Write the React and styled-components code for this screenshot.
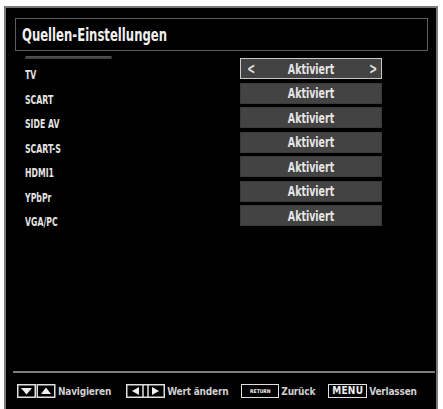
import React from 'react';
import styled, { createGlobalStyle } from 'styled-components';

const Global = createGlobalStyle`
  html, body {
    margin: 0;
    padding: 0;
    background: #fff;
    overflow: hidden;
  }
  body {
    font-family: "DejaVu Sans Condensed", "Liberation Sans Narrow", "DejaVu Sans", sans-serif;
    font-stretch: condensed;
  }
`;

const Frame = styled.div`
  box-sizing: border-box;
  margin: 6px 5px 0 4px;
  height: 405px;
  background: #000;
  border: 2px solid #7a7a7a;
  display: flex;
  flex-direction: column;
`;

const TitleBox = styled.div`
  box-sizing: border-box;
  margin: 10px 8px 0 9px;
  height: 33px;
  border: 1.5px solid #5e5e5e;
  display: flex;
  align-items: center;
  padding-left: 6px;
`;

const Title = styled.h1`
  margin: 0;
  font-size: 18px;
  font-weight: bold;
  color: #f0f0f0;
  transform: scaleX(0.72);
  transform-origin: left center;
  white-space: nowrap;
`;

const List = styled.div`
  margin-top: 7px;
  padding: 0 54px 0 19px;
  display: flex;
  flex-direction: column;
  gap: 3.5px;
`;

const Row = styled.div`
  display: grid;
  grid-template-columns: 1fr 142px;
  height: 21px;
`;

const LabelCell = styled.div`
  display: flex;
  flex-direction: column;
  align-items: flex-start;
  justify-content: ${p => (p.$first ? 'space-between' : 'flex-end')};
`;

const FocusBar = styled.div`
  width: 87px;
  height: 3px;
  margin-top: -2px;
  border-radius: 2px;
  background: linear-gradient(#555, #3a3a3a);
`;

const Label = styled.span`
  display: inline-block;
  font-size: 12px;
  font-weight: bold;
  line-height: 12px;
  color: #e4e4e4;
  margin-bottom: -2px;
  white-space: nowrap;
  transform: scaleX(0.72);
  transform-origin: left center;
`;

const Value = styled.div`
  box-sizing: border-box;
  display: flex;
  align-items: center;
  justify-content: space-between;
  padding: 0 5px;
  background: #434343;
  border: ${p => (p.$active ? '1.5px solid #c8c8c8' : '1px solid #3a3a3a')};
  color: #e6e6e6;
`;

const ValueText = styled.span`
  flex: 1;
  text-align: center;
  font-size: 14px;
  font-weight: bold;
  transform: scaleX(0.75);
`;

const Arrow = styled.span`
  width: 8px;
  font-size: 15px;
  font-weight: bold;
  color: #e0e0e0;
  text-align: center;
  transform: scaleX(0.7);
  visibility: ${p => (p.$hidden ? 'hidden' : 'visible')};
`;

const Footer = styled.div`
  margin-top: auto;
`;

const Separator = styled.div`
  height: 2px;
  margin: 0 1px 0 7px;
  background: #7d7d7d;
`;

const FooterBar = styled.div`
  display: flex;
  align-items: center;
  padding: 11px 0 11px 11px;
  height: 14px;
`;

const Hint = styled.div`
  display: flex;
  align-items: center;
  gap: 2px;
  margin-right: ${p => p.$gap}px;
`;

const HintText = styled.span`
  font-size: 10px;
  font-weight: bold;
  color: #cfcfcf;
  letter-spacing: -0.2px;
`;

const KeyBox = styled.span`
  box-sizing: border-box;
  display: inline-flex;
  align-items: center;
  justify-content: center;
  width: ${p => p.$w}px;
  height: 14px;
  border: 1.5px solid #e0e0e0;
  color: #eee;
  font-weight: bold;
  font-size: ${p => p.$fs}px;
  line-height: 1;
  letter-spacing: ${p => (p.$fs < 7 ? '0' : '0.3px')};
`;

const sources = ['TV', 'SCART', 'SIDE AV', 'SCART-S', 'HDMI1', 'YPbPr', 'VGA/PC'];

const UpDown = () => (
  <svg width="39" height="14" viewBox="0 0 39 14">
    <rect x="0.75" y="0.75" width="17.5" height="12.5" fill="none" stroke="#e0e0e0" strokeWidth="1.5" />
    <rect x="20.25" y="0.75" width="17.5" height="12.5" fill="none" stroke="#e0e0e0" strokeWidth="1.5" />
    <polygon points="4,4 15,4 9.5,10.5" fill="#f0f0f0" />
    <polygon points="24,10 34,10 29,3.5" fill="#f0f0f0" />
  </svg>
);

const LeftRight = () => (
  <svg width="39" height="14" viewBox="0 0 39 14">
    <rect x="0.75" y="0.75" width="37.5" height="12.5" fill="none" stroke="#e0e0e0" strokeWidth="1.5" />
    <line x1="17" y1="1" x2="17" y2="13" stroke="#e0e0e0" strokeWidth="1.5" />
    <line x1="22" y1="1" x2="22" y2="13" stroke="#e0e0e0" strokeWidth="1.5" />
    <polygon points="13,3 13,11 6,7" fill="#f0f0f0" />
    <polygon points="26,3 26,11 33,7" fill="#f0f0f0" />
  </svg>
);

export default function App() {
  return (
    <>
      <Global />
      <Frame>
        <TitleBox>
          <Title>Quellen-Einstellungen</Title>
        </TitleBox>
        <List>
          {sources.map((s, i) => (
            <Row key={s}>
              <LabelCell $first={i === 0}>
                {i === 0 && <FocusBar />}
                <Label>{s}</Label>
              </LabelCell>
              <Value $active={i === 0}>
                <Arrow $hidden={i !== 0}>&lt;</Arrow>
                <ValueText>Aktiviert</ValueText>
                <Arrow $hidden={i !== 0}>&gt;</Arrow>
              </Value>
            </Row>
          ))}
        </List>
        <Footer>
          <Separator />
          <FooterBar>
            <Hint $gap={15}>
              <UpDown />
              <HintText>Navigieren</HintText>
            </Hint>
            <Hint $gap={13}>
              <LeftRight />
              <HintText>Wert ändern</HintText>
            </Hint>
            <Hint $gap={13}>
              <KeyBox $w={38} $fs={5}>RETURN</KeyBox>
              <HintText>Zurück</HintText>
            </Hint>
            <Hint $gap={0}>
              <KeyBox $w={39} $fs={10}>MENU</KeyBox>
              <HintText>Verlassen</HintText>
            </Hint>
          </FooterBar>
        </Footer>
      </Frame>
    </>
  );
}
